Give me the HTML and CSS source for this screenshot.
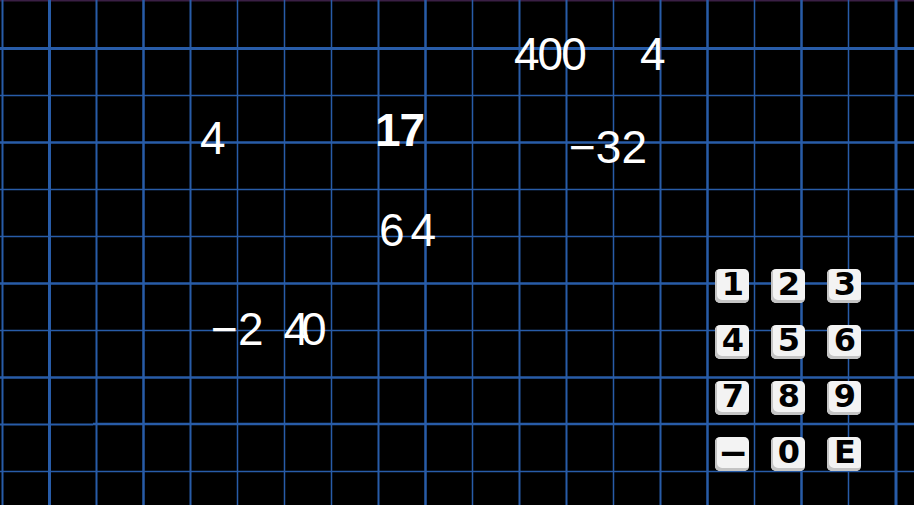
FILE: index.html
```html
<!DOCTYPE html>
<html>
<head>
<meta charset="utf-8">
<link rel="stylesheet" href="styles.css">
</head>
<body>
<main class="board">
  <svg class="grid" width="914" height="505" viewBox="0 0 914 505" xmlns="http://www.w3.org/2000/svg">
    <line x1="0" y1="0.5" x2="914" y2="0.5" stroke="#3a1f45" stroke-width="2"/>
    <g stroke="#285ca8" stroke-width="2">
      <line x1="2.5" y1="0" x2="2.5" y2="505"/>
      <line x1="49.5" y1="0" x2="49.5" y2="505" stroke-width="3"/>
      <line x1="96.5" y1="0" x2="96.5" y2="505"/>
      <line x1="143.5" y1="0" x2="143.5" y2="505" stroke-width="2.5"/>
      <line x1="190.5" y1="0" x2="190.5" y2="505"/>
      <line x1="237.5" y1="0" x2="237.5" y2="505" stroke-width="1.5"/>
      <line x1="284.5" y1="0" x2="284.5" y2="505" stroke-width="1.5"/>
      <line x1="331.5" y1="0" x2="331.5" y2="505" stroke-width="1.5"/>
      <line x1="378.5" y1="0" x2="378.5" y2="505"/>
      <line x1="425.5" y1="0" x2="425.5" y2="505" stroke-width="2.5"/>
      <line x1="472.5" y1="0" x2="472.5" y2="505" stroke-width="1.5"/>
      <line x1="519.5" y1="0" x2="519.5" y2="505"/>
      <line x1="566.5" y1="0" x2="566.5" y2="505"/>
      <line x1="613.5" y1="0" x2="613.5" y2="505" stroke-width="1.5"/>
      <line x1="660.5" y1="0" x2="660.5" y2="505"/>
      <line x1="707.5" y1="0" x2="707.5" y2="505" stroke-width="2.5"/>
      <line x1="754.5" y1="0" x2="754.5" y2="505" stroke-width="1.5"/>
      <line x1="801.5" y1="0" x2="801.5" y2="505" stroke-width="2.5"/>
      <line x1="848.5" y1="0" x2="848.5" y2="505" stroke-width="1.5"/>
      <line x1="896" y1="0" x2="896" y2="505" stroke-width="3"/>
    </g>
    <g stroke="#285ca8" stroke-width="2">
      <line x1="0" y1="48.5" x2="914" y2="48.5" stroke-width="3"/>
      <line x1="0" y1="95.5" x2="914" y2="95.5" stroke-width="1.5"/>
      <line x1="0" y1="142.5" x2="914" y2="142.5" stroke-width="2.5"/>
      <line x1="0" y1="189.5" x2="914" y2="189.5" stroke-width="1.5"/>
      <line x1="0" y1="236.5" x2="914" y2="236.5" stroke-width="1.5"/>
      <line x1="0" y1="283.5" x2="914" y2="283.5" stroke-width="2.5"/>
      <line x1="0" y1="330.5" x2="914" y2="330.5" stroke-width="1.5"/>
      <line x1="0" y1="377.5" x2="914" y2="377.5" stroke-width="2.5"/>
      <line x1="0" y1="424.5" x2="93" y2="424.5"/>
      <line x1="93" y1="424" x2="914" y2="424" stroke-width="2.5"/>
      <line x1="0" y1="471.5" x2="914" y2="471.5" stroke-width="1.5"/>
    </g>
  </svg>

  <span class="num" style="left:514px;top:31px">400</span>
  <span class="num" style="left:640px;top:31px">4</span>
  <span class="num" style="left:200px;top:115px">4</span>
  <span class="num num-bold" style="left:375px;top:107px">17</span>
  <span class="num num-loose" style="left:569px;top:124px">−32</span>
  <span class="num num-wide" style="left:379px;top:207px">64</span>
  <span class="num num-loose" style="left:211px;top:306px">−<span class="gap">2</span><span class="tight">40</span></span>

  <div class="keypad">
    <button class="key">1</button>
    <button class="key">2</button>
    <button class="key">3</button>
    <button class="key">4</button>
    <button class="key">5</button>
    <button class="key">6</button>
    <button class="key">7</button>
    <button class="key">8</button>
    <button class="key">9</button>
    <button class="key key-dash">−</button>
    <button class="key">0</button>
    <button class="key">E</button>
  </div>
</main>
</body>
</html>
```

FILE: styles.css
```css
html, body {
  margin: 0;
  padding: 0;
  background: #000;
  overflow: hidden;
}

.board {
  position: relative;
  width: 914px;
  height: 505px;
  background: #000;
  overflow: hidden;
}

.grid {
  position: absolute;
  left: 0;
  top: 0;
  display: block;
}

.num {
  position: absolute;
  color: #fff;
  font-family: "Liberation Sans", Arial, sans-serif;
  font-size: 46px;
  line-height: 46px;
  letter-spacing: -2px;
  white-space: nowrap;
}

.num-bold {
  font-weight: bold;
  letter-spacing: -1px;
}

.num-loose {
  letter-spacing: 0;
}

.num-wide {
  letter-spacing: 6px;
}

.gap {
  margin-right: 20px;
}

.tight {
  letter-spacing: -8px;
}

.keypad {
  position: absolute;
  left: 715px;
  top: 269px;
  display: grid;
  grid-template-columns: repeat(3, 34px);
  grid-auto-rows: 34px;
  column-gap: 22px;
  row-gap: 22px;
}

.key {
  width: 34px;
  height: 34px;
  margin: 0;
  padding: 0 0 3px 2px;
  border: none;
  border-radius: 5px;
  background: #f3f3f3;
  box-shadow: inset 2px -3px 0 #c4c4c4;
  color: #000;
  font-family: "DejaVu Sans", sans-serif;
  font-weight: bold;
  font-size: 32px;
  line-height: 31px;
  display: flex;
  align-items: center;
  justify-content: center;
}

.key-dash {
  font-size: 36px;
}
```
